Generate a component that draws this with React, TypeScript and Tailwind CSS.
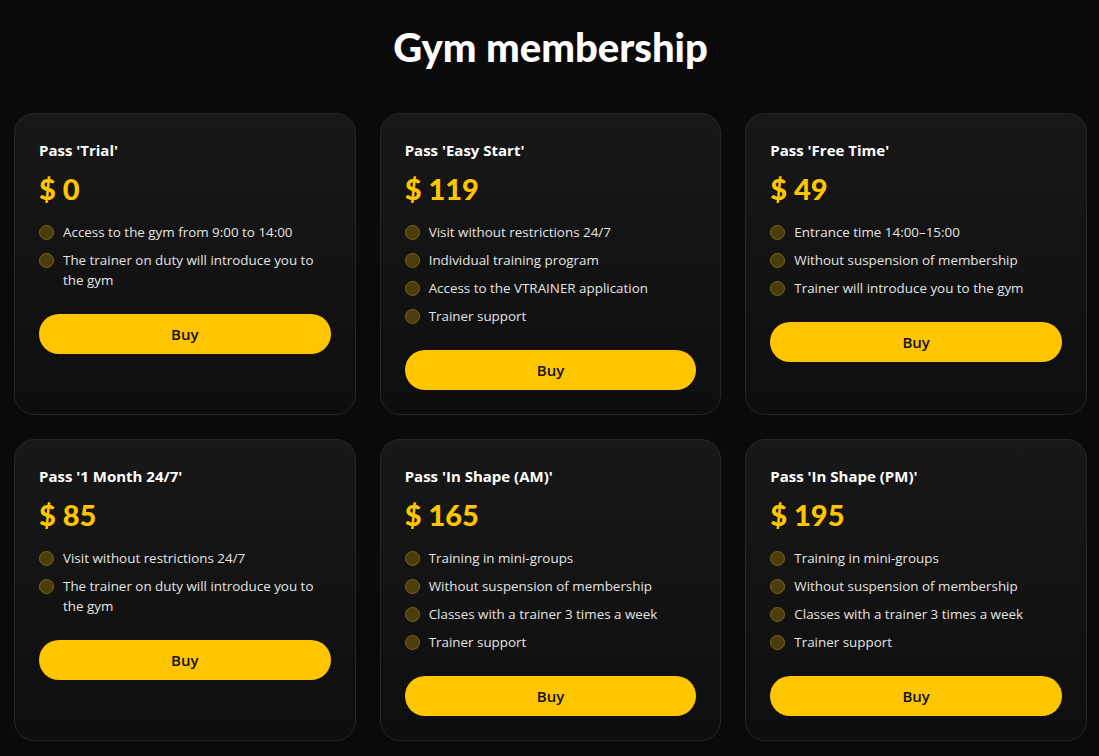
const plans = [
  {
    name: "Pass 'Trial'",
    price: 0,
    features: ["Access to the gym from 9:00 to 14:00", "The trainer on duty will introduce you to the gym"],
  },
  {
    name: "Pass 'Easy Start'",
    price: 119,
    features: [
      "Visit without restrictions 24/7",
      "Individual training program",
      "Access to the VTRAINER application",
      "Trainer support",
    ],
  },
  {
    name: "Pass 'Free Time'",
    price: 49,
    features: ["Entrance time 14:00–15:00", "Without suspension of membership", "Trainer will introduce you to the gym"],
  },
  {
    name: "Pass '1 Month 24/7'",
    price: 85,
    features: ["Visit without restrictions 24/7", "The trainer on duty will introduce you to the gym"],
  },
  {
    name: "Pass 'In Shape (AM)'",
    price: 165,
    features: [
      "Training in mini-groups",
      "Without suspension of membership",
      "Classes with a trainer 3 times a week",
      "Trainer support",
    ],
  },
  {
    name: "Pass 'In Shape (PM)'",
    price: 195,
    features: [
      "Training in mini-groups",
      "Without suspension of membership",
      "Classes with a trainer 3 times a week",
      "Trainer support",
    ],
  },
];

const PlanCard = ({ plan }: { plan: (typeof plans)[number] }) => {
  return (
    <div className="flex flex-col rounded-[20px] border border-[#262626] bg-gradient-to-b from-[#181818] to-[#0e0e0e] p-6">
      <h2 className="text-[15px] leading-6 font-bold text-white">{plan.name}</h2>
      <div className="mt-2.5 font-['Lato',sans-serif] text-[29px] leading-[34px] font-black text-[#ffc600]">
        $ {plan.price}
      </div>
      <ul className="mt-4 flex flex-col gap-2">
        {plan.features.map((f) => (
          <li key={f} className="flex items-start gap-[9px] text-[13.4px] leading-5 text-[#e4e4e4]">
            <span className="mt-[3px] h-[15px] w-[15px] shrink-0 rounded-full border border-[#7a6512] bg-[#4a3e0c]" />
            <span>{f}</span>
          </li>
        ))}
      </ul>
      <button className="mt-6 h-10 w-full rounded-full bg-[#ffc600] text-[15px] font-semibold text-[#111]">
        Buy
      </button>
    </div>
  );
};

export default function App() {
  return (
    <div className="min-h-screen bg-[#0a0a0a] pt-[27px] pr-[12px] pb-4 pl-[14px] font-['Open_Sans',sans-serif]">
      <h1 className="text-center font-['Lato',sans-serif] text-[40px] leading-10 font-black text-white">
        Gym membership
      </h1>
      <div className="mt-[46px] grid grid-cols-3 gap-6">
        {plans.map((p) => (
          <PlanCard key={p.name} plan={p} />
        ))}
      </div>
    </div>
  );
}
